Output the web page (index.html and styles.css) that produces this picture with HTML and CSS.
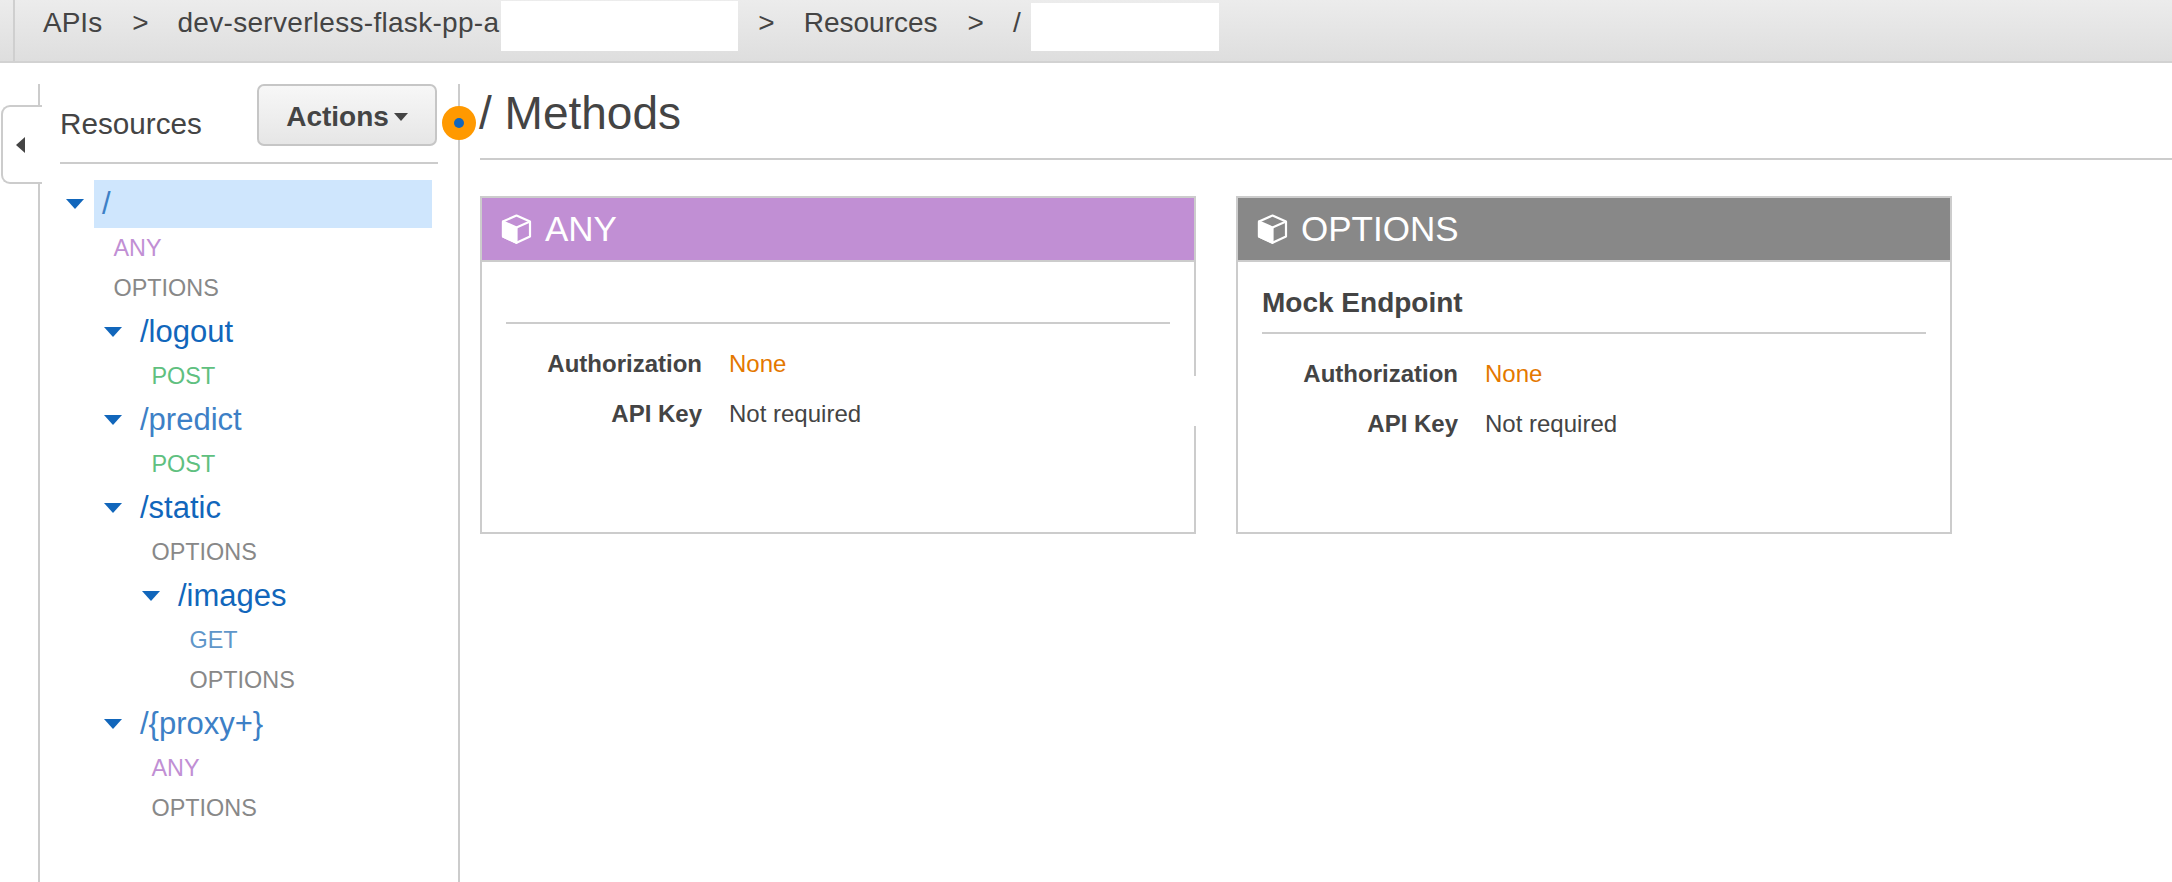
FILE: index.html
```html
<!DOCTYPE html>
<html lang="en">
<head>
<meta charset="utf-8">
<title>API Gateway Resources</title>
<link rel="stylesheet" href="styles.css">
</head>
<body>
<header class="topbar">
  <nav class="crumbs">
    <span class="crumb">APIs</span>
    <span class="crumb sep">&gt;</span>
    <span class="crumb crumb-api">dev-serverless-flask-pp-a</span>
    <span class="mask mask-a"></span>
    <span class="crumb sep sep-b">&gt;</span>
    <span class="crumb">Resources</span>
    <span class="crumb sep sep-c">&gt;</span>
    <span class="crumb">/</span>
    <span class="mask mask-b"></span>
  </nav>
</header>
<div class="workspace">
  <aside class="sidebar">
    <div class="tab"><span class="tab-arrow"></span></div>
    <div class="marker"><span class="marker-dot"></span></div>
    <div class="side-head">
      <h2 class="side-title">Resources</h2>
      <button class="actions" type="button">Actions<span class="caret"></span></button>
    </div>
    <div class="tree">
      <div class="path"><span class="toggle"></span><span class="label light selected">/</span></div>
      <div class="method any">ANY</div>
      <div class="method options">OPTIONS</div>
      <div class="node">
        <div class="path"><span class="toggle"></span><span class="label">/logout</span></div>
        <div class="method post">POST</div>
      </div>
      <div class="node">
        <div class="path"><span class="toggle"></span><span class="label light">/predict</span></div>
        <div class="method post">POST</div>
      </div>
      <div class="node">
        <div class="path"><span class="toggle"></span><span class="label">/static</span></div>
        <div class="method options">OPTIONS</div>
        <div class="node">
          <div class="path"><span class="toggle"></span><span class="label">/images</span></div>
          <div class="method get">GET</div>
          <div class="method options">OPTIONS</div>
        </div>
      </div>
      <div class="node">
        <div class="path"><span class="toggle"></span><span class="label light">/{proxy+}</span></div>
        <div class="method any">ANY</div>
        <div class="method options">OPTIONS</div>
      </div>
    </div>
  </aside>
  <main class="content">
    <h1 class="page-title"><span class="page-title-text">/ Methods</span></h1>
    <div class="cards">
      <section class="card card-any">
        <div class="card-head">
          <svg class="cube" viewBox="0 0 31 30"><path d="M15.5 1.5 L29 7.5 V22.5 L15.5 28.8 L2 22.5 V7.5 Z" fill="none" stroke="#fff" stroke-width="2.2" stroke-linejoin="round"/><path d="M2 7.5 L15.5 13.5 V28.8 L2 22.5 Z" fill="#fff" stroke="#fff" stroke-width="2.2" stroke-linejoin="round"/><path d="M15.5 13.5 L29 7.5" fill="none" stroke="#fff" stroke-width="2.2"/></svg>
          <span>ANY</span>
        </div>
        <div class="card-body">
          <div class="sub sub-empty"></div>
          <dl class="facts">
            <dt>Authorization</dt><dd class="none">None</dd>
            <dt>API Key</dt><dd>Not required</dd>
          </dl>
        </div>
        <span class="border-gap"></span>
      </section>
      <section class="card card-options">
        <div class="card-head">
          <svg class="cube" viewBox="0 0 31 30"><path d="M15.5 1.5 L29 7.5 V22.5 L15.5 28.8 L2 22.5 V7.5 Z" fill="none" stroke="#fff" stroke-width="2.2" stroke-linejoin="round"/><path d="M2 7.5 L15.5 13.5 V28.8 L2 22.5 Z" fill="#fff" stroke="#fff" stroke-width="2.2" stroke-linejoin="round"/><path d="M15.5 13.5 L29 7.5" fill="none" stroke="#fff" stroke-width="2.2"/></svg>
          <span>OPTIONS</span>
        </div>
        <div class="card-body">
          <div class="sub">Mock Endpoint</div>
          <dl class="facts">
            <dt>Authorization</dt><dd class="none">None</dd>
            <dt>API Key</dt><dd>Not required</dd>
          </dl>
        </div>
      </section>
    </div>
  </main>
</div>
</body>
</html>
```
FILE: styles.css
```css
* { box-sizing: border-box; }
html, body { margin: 0; padding: 0; }
body {
  width: 2172px;
  height: 882px;
  overflow: hidden;
  background: #fff;
  color: #444;
  font-family: "Liberation Sans", Arial, sans-serif;
  display: flex;
  flex-direction: column;
}

/* top bar */
.topbar {
  height: 63px;
  flex: none;
  padding-left: 13px;
  background: linear-gradient(#ececec, #dedede);
  border-bottom: 2px solid #d2d2d2;
}
.crumbs {
  height: 61px;
  display: flex;
  align-items: flex-start;
  padding: 1px 0 0 28px;
  border-left: 2px solid #cfcfcf;
  font-size: 28px;
}
.crumb { line-height: 43px; white-space: nowrap; }
.crumb-api { letter-spacing: 0.3px; }
.sep { margin: 0 29px 0 30px; }
.sep-b { margin: 0 29px 0 20px; }
.sep-c { margin: 0 29px 0 30px; }
.mask { background: #fff; display: block; }
.mask-a { width: 237px; height: 50px; margin-left: 2px; }
.mask-b { width: 188px; height: 48px; margin: 2px 0 0 10px; }

/* layout */
.workspace {
  flex: 1;
  display: flex;
  margin-top: 21px;
  min-height: 0;
}

/* sidebar */
.sidebar {
  position: relative;
  flex: none;
  width: 422px;
  margin-left: 38px;
  padding: 0 20px;
  border-left: 2px solid #ccc;
  border-right: 2px solid #ccc;
}
.tab {
  position: absolute;
  left: -39px;
  top: 21px;
  width: 41px;
  height: 79px;
  display: flex;
  align-items: center;
  padding-left: 13px;
  background: #fff;
  border: 2px solid #ccc;
  border-right: 0;
  border-radius: 9px 0 0 9px;
}
.tab-arrow {
  width: 0;
  height: 0;
  border-style: solid;
  border-width: 8px 9px 8px 0;
  border-color: transparent #444 transparent transparent;
}
.marker {
  position: absolute;
  right: -18px;
  top: 22px;
  width: 34px;
  height: 34px;
  border-radius: 50%;
  background: #f90;
  display: flex;
  align-items: center;
  justify-content: center;
}
.marker-dot {
  width: 10px;
  height: 10px;
  border-radius: 50%;
  background: #1166bb;
}
.side-head {
  height: 80px;
  display: flex;
  justify-content: space-between;
  align-items: flex-start;
  border-bottom: 2px solid #ccc;
}
.side-title {
  margin: 22px 0 0;
  font-size: 29.7px;
  font-weight: 400;
  line-height: 36px;
}
.actions {
  width: 180px;
  height: 62px;
  margin-right: 1px;
  padding: 3px 0 0;
  display: flex;
  align-items: center;
  justify-content: center;
  gap: 5px;
  border: 2px solid #c6c6c6;
  border-radius: 7px;
  background: linear-gradient(#f7f7f7, #e6e6e6);
  color: #444;
  font: 700 28px "Liberation Sans", Arial, sans-serif;
}
.caret {
  width: 0;
  height: 0;
  border-style: solid;
  border-width: 8px 7.5px 0;
  border-color: #444 transparent transparent;
}

/* tree */
.tree { margin-top: 16px; }
.node { margin-left: 38px; }
.path {
  height: 48px;
  display: flex;
  align-items: center;
  padding-left: 6px;
}
.toggle {
  flex: none;
  width: 0;
  height: 0;
  margin-right: 10px;
  border-style: solid;
  border-width: 10px 9px 0;
  border-color: #1166bb transparent transparent;
}
.label {
  flex: 1;
  align-self: stretch;
  margin-right: 6px;
  padding-left: 8px;
  color: #1166bb;
  font-size: 31px;
  line-height: 48px;
}
.label.light { color: #3d80c6; }
.label.selected { background: #cfe6fd; }
.method {
  height: 40px;
  padding-left: 53.5px;
  font-size: 23.4px;
  line-height: 40px;
}
.any { color: #c18fd4; }
.options { color: #888; }
.post { color: #5fc080; }
.get { color: #5f96c9; }

/* content */
.content {
  flex: 1;
  min-width: 0;
  padding-left: 20px;
}
.page-title {
  height: 76px;
  margin: 0;
  border-bottom: 2px solid #ccc;
  font-size: 46px;
  font-weight: 400;
  line-height: 58px;
}
.page-title-text { margin-left: -1px; }
.cards {
  display: flex;
  gap: 40px;
  margin-top: 36px;
}
.card {
  position: relative;
  width: 716px;
  height: 338px;
  border: 2px solid #ccc;
}
.card-head {
  height: 64px;
  display: flex;
  align-items: center;
  gap: 13px;
  padding-left: 19px;
  border-bottom: 2px solid #ccc;
  color: #fff;
  font-size: 35px;
}
.card-any .card-head { background: #c18fd4; }
.card-options .card-head { background: #888; }
.cube { width: 31px; height: 30px; flex: none; }
.card-body { padding: 0 24px; }
.sub {
  height: 72px;
  padding-top: 23px;
  border-bottom: 2px solid #ccc;
  font-size: 28px;
  font-weight: 700;
  line-height: 36px;
}
.sub-empty { height: 62px; }
.facts {
  display: grid;
  grid-template-columns: 196px 1fr;
  column-gap: 27px;
  margin: 15px 0 0;
  font-size: 24px;
  line-height: 50px;
}
.facts dt { font-weight: 700; text-align: right; }
.facts dd { margin: 0; }
.facts .none { color: #e47800; }
.border-gap {
  position: absolute;
  right: -2px;
  top: 178px;
  width: 2px;
  height: 50px;
  background: #fff;
}
```
